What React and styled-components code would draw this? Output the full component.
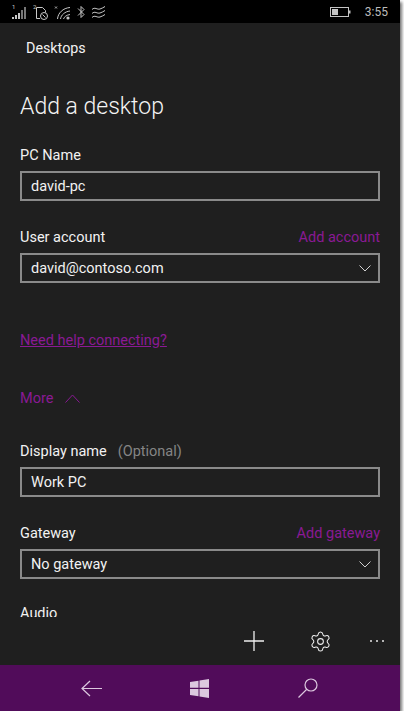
import React from "react";
import styled, { createGlobalStyle } from "styled-components";
import { Settings } from "lucide-react";

const Global = createGlobalStyle`
  html, body { margin: 0; padding: 0; background: #fff; }
  body { font-family: Roboto, "Open Sans", sans-serif; }
`;

const Frame = styled.div`
  width: 400px;
  height: 711px;
  display: flex;
  flex-direction: column;
  overflow: hidden;
  box-shadow: 2px 2px 3px rgba(0, 0, 0, 0.55);
`;

const StatusBar = styled.div`
  height: 23px;
  flex: none;
  background: #000;
  display: flex;
  align-items: center;
  justify-content: space-between;
  padding: 0 12px 0 11px;
  color: #c8c8c8;
`;

const StatusGroup = styled.div`
  display: flex;
  align-items: center;
  gap: ${(p) => p.$gap}px;
`;

const Clock = styled.span`
  font-size: 12px;
  color: #bdbdbd;
`;

const Content = styled.div`
  flex: 1;
  min-height: 0;
  background: #1f1f1f;
  display: flex;
  flex-direction: column;
`;

const Scroller = styled.div`
  height: 594px;
  flex: none;
  overflow: hidden;
  padding: 0 20px;
  box-sizing: border-box;
`;

const AppTitle = styled.div`
  font-size: 14.3px;
  line-height: 20px;
  color: #f2f2f2;
  margin: 15px 0 0 6px;
`;

const PageTitle = styled.h1`
  font-size: 23px;
  font-weight: 300;
  line-height: 30px;
  color: #f4f4f4;
  margin: 34px 0 0;
`;

const Field = styled.div`
  margin-top: ${(p) => p.$top}px;
`;

const LabelRow = styled.div`
  display: flex;
  justify-content: space-between;
  align-items: baseline;
  height: 21px;
  line-height: 21px;
  margin-bottom: 5px;
`;

const Label = styled.span`
  font-size: 14.5px;
  color: #f2f2f2;
`;

const Optional = styled.span`
  color: #858585;
  margin-left: 11px;
`;

const AccentLink = styled.a`
  font-size: 14.5px;
  color: #8a1a94;
  text-decoration: ${(p) => (p.$underline ? "underline" : "none")};
`;

const Box = styled.div`
  height: 30px;
  box-sizing: border-box;
  border: 2px solid #8a8a8a;
  display: flex;
  align-items: center;
  justify-content: space-between;
  padding: 0 7px 0 9px;
  font-size: 14.5px;
  color: #f2f2f2;
`;

const HelpRow = styled.div`
  margin-top: 47px;
  line-height: 20px;
`;

const MoreRow = styled.div`
  margin-top: 37px;
  height: 20px;
  display: flex;
  align-items: center;
  gap: 12px;
`;

const CommandBar = styled.div`
  height: 48px;
  flex: none;
  display: flex;
  align-items: center;
  justify-content: flex-end;
  padding-right: 16px;
  color: #f0f0f0;
`;

const CommandSlot = styled.div`
  display: flex;
  margin-left: ${(p) => p.$left}px;
`;

const Dots = styled.div`
  display: flex;
  gap: 4px;
  span {
    width: 2px;
    height: 2px;
    border-radius: 50%;
    background: #e8e8e8;
  }
`;

const NavBar = styled.div`
  height: 46px;
  flex: none;
  background: #510c5a;
  color: #dcc8df;
  display: flex;
  align-items: center;
`;

const NavSlot = styled.div`
  flex: none;
  width: ${(p) => p.$w}px;
  display: flex;
  justify-content: center;
`;

const Signal = () => (
  <svg width="16" height="20" viewBox="0 0 16 20" fill="currentColor">
    <text x="1" y="7" fontSize="6" fontFamily="Roboto, sans-serif">1</text>
    <rect x="1" y="15" width="2" height="2" />
    <rect x="4" y="13" width="2" height="4" />
    <rect x="7" y="11" width="2" height="6" />
    <rect x="10" y="8" width="2" height="9" fill="#777" />
    <rect x="13" y="5" width="2" height="12" fill="#777" />
  </svg>
);

const SimIcon = () => (
  <svg width="17" height="20" viewBox="0 0 17 20" fill="none" stroke="currentColor">
    <text x="1" y="7" fontSize="6" fontFamily="Roboto, sans-serif" fill="currentColor" stroke="none">2</text>
    <path d="M4.500 16.500V5.500h6l3 3v2" />
    <circle cx="12" cy="14" r="3.500" />
    <path d="M10.500 12.500l3 3M4.500 16.500H8" />
  </svg>
);

const Wifi = () => (
  <svg width="17" height="20" viewBox="0 0 17 20" fill="none" stroke="currentColor">
    <path d="M1 4.500l2 2M3 4.500l-2 2" strokeWidth="0.800" />
    <path d="M3.500 17C4 11 9 6 16 5.500M6.500 17C7 13 11 9.500 16 9M9.500 17C10 15 12.500 13 16 12.500" />
    <circle cx="14" cy="16" r="1.600" fill="currentColor" stroke="none" />
  </svg>
);

const Bluetooth = () => (
  <svg width="10" height="14" viewBox="0 0 10 14" fill="none" stroke="currentColor">
    <path d="M2 3.500l6 6-3 3V1.500l3 3-6 6" />
  </svg>
);

const Waves = () => (
  <svg width="15" height="12" viewBox="0 0 15 12" fill="none" stroke="currentColor">
    <path d="M1 3.500c3-3 5 .5 8-.5 2-.7 3.500-1.500 5-2.500M1 7.500c3-3 5 .5 8-.5 2-.7 3.500-1.500 5-2.500M1 11.500c3-3 5 .5 8-.5 2-.7 3.500-1.500 5-2.500" />
  </svg>
);

const Battery = () => (
  <svg width="21" height="10" viewBox="0 0 21 10">
    <rect x="0.500" y="0.500" width="18" height="9" fill="none" stroke="#c4c4c4" />
    <rect x="2" y="2" width="6" height="6" fill="#c4c4c4" />
    <rect x="19" y="3.500" width="1.500" height="3" fill="#c4c4c4" />
  </svg>
);

const ChevronDown = () => (
  <svg width="12" height="7" viewBox="0 0 12 7" fill="none" stroke="#d0d0d0">
    <path d="M0.500 0.500L6 6l5.500-5.500" />
  </svg>
);

const ChevronUp = () => (
  <svg width="15" height="9" viewBox="0 0 15 9" fill="none" stroke="#8a1a94">
    <path d="M0.500 8.500L7.500 1l7 7.500" />
  </svg>
);

const Plus = () => (
  <svg width="20" height="20" viewBox="0 0 20 20" fill="none" stroke="currentColor" strokeWidth="1.300">
    <path d="M0 10h20M10 0v20" />
  </svg>
);

const Back = () => (
  <svg width="21" height="17" viewBox="0 0 21 17" fill="none" stroke="currentColor" strokeWidth="1.200">
    <path d="M9 1L1 8.500 9 16M1 8.500h20" />
  </svg>
);

const WinLogo = () => (
  <svg width="19" height="19" viewBox="0 0 19 19" fill="currentColor">
    <path d="M0 3l8.500-1.300v7H0zM9.500 1.500L19 0v8.700H9.500zM0 10h8.500v7.300L0 16zM9.500 10H19v9l-9.500-1.500z" />
  </svg>
);

const Search = () => (
  <svg width="20" height="20" viewBox="0 0 20 20" fill="none" stroke="currentColor" strokeWidth="1.200">
    <circle cx="13" cy="7" r="6" />
    <path d="M8.800 11.300L0.500 19.500" />
  </svg>
);

export default function App() {
  return (
    <>
      <Global />
      <Frame>
        <StatusBar>
          <StatusGroup $gap={5}>
            <Signal />
            <SimIcon />
            <Wifi />
            <Bluetooth />
            <Waves />
          </StatusGroup>
          <StatusGroup $gap={14}>
            <Battery />
            <Clock>3:55</Clock>
          </StatusGroup>
        </StatusBar>
        <Content>
          <Scroller>
            <AppTitle>Desktops</AppTitle>
            <PageTitle>Add a desktop</PageTitle>
            <Field $top={23}>
              <LabelRow>
                <Label>PC Name</Label>
              </LabelRow>
              <Box>david-pc</Box>
            </Field>
            <Field $top={26}>
              <LabelRow>
                <Label>User account</Label>
                <AccentLink>Add account</AccentLink>
              </LabelRow>
              <Box>
                david@contoso.com
                <ChevronDown />
              </Box>
            </Field>
            <HelpRow>
              <AccentLink $underline>Need help connecting?</AccentLink>
            </HelpRow>
            <MoreRow>
              <AccentLink>More</AccentLink>
              <ChevronUp />
            </MoreRow>
            <Field $top={33}>
              <LabelRow>
                <Label>
                  Display name<Optional>(Optional)</Optional>
                </Label>
              </LabelRow>
              <Box>Work PC</Box>
            </Field>
            <Field $top={26}>
              <LabelRow>
                <Label>Gateway</Label>
                <AccentLink>Add gateway</AccentLink>
              </LabelRow>
              <Box>
                No gateway
                <ChevronDown />
              </Box>
            </Field>
            <Field $top={24}>
              <Label>Audio</Label>
            </Field>
          </Scroller>
          <CommandBar>
            <Plus />
            <CommandSlot $left={45}>
              <Settings size={23} strokeWidth={1.1} />
            </CommandSlot>
            <CommandSlot $left={38}>
              <Dots>
                <span />
                <span />
                <span />
              </Dots>
            </CommandSlot>
          </CommandBar>
        </Content>
        <NavBar>
          <NavSlot $w={183}>
            <Back />
          </NavSlot>
          <NavSlot $w={33}>
            <WinLogo />
          </NavSlot>
          <NavSlot $w={184}>
            <Search />
          </NavSlot>
        </NavBar>
      </Frame>
    </>
  );
}
